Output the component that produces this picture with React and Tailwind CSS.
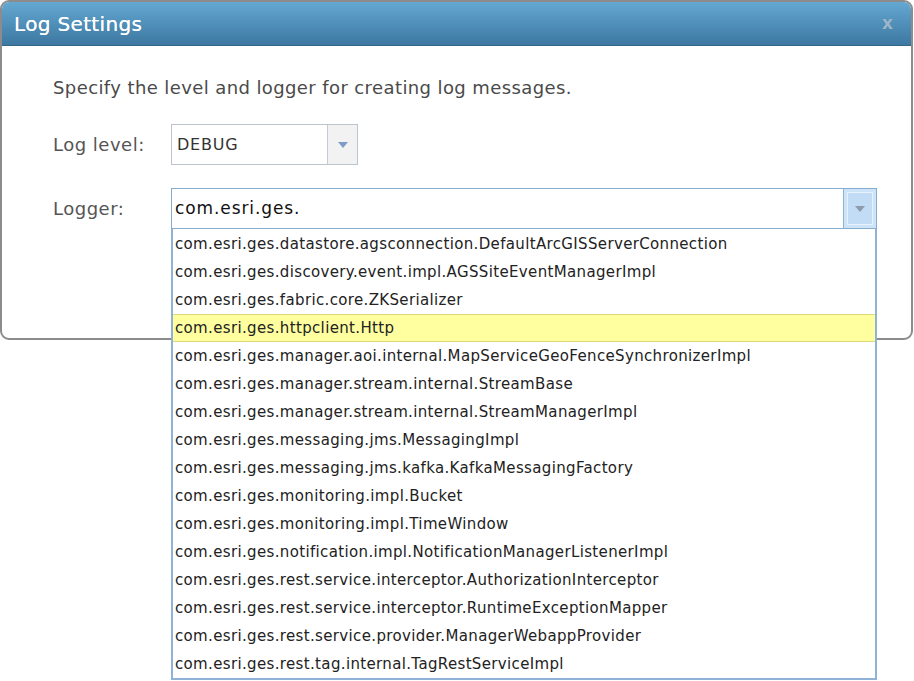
import React from 'react';

const loggers = [
  'com.esri.ges.datastore.agsconnection.DefaultArcGISServerConnection',
  'com.esri.ges.discovery.event.impl.AGSSiteEventManagerImpl',
  'com.esri.ges.fabric.core.ZKSerializer',
  'com.esri.ges.httpclient.Http',
  'com.esri.ges.manager.aoi.internal.MapServiceGeoFenceSynchronizerImpl',
  'com.esri.ges.manager.stream.internal.StreamBase',
  'com.esri.ges.manager.stream.internal.StreamManagerImpl',
  'com.esri.ges.messaging.jms.MessagingImpl',
  'com.esri.ges.messaging.jms.kafka.KafkaMessagingFactory',
  'com.esri.ges.monitoring.impl.Bucket',
  'com.esri.ges.monitoring.impl.TimeWindow',
  'com.esri.ges.notification.impl.NotificationManagerListenerImpl',
  'com.esri.ges.rest.service.interceptor.AuthorizationInterceptor',
  'com.esri.ges.rest.service.interceptor.RuntimeExceptionMapper',
  'com.esri.ges.rest.service.provider.ManagerWebappProvider',
  'com.esri.ges.rest.tag.internal.TagRestServiceImpl',
];

const Caret = ({ color }) => (
  <svg width="10" height="6" viewBox="0 0 10 6">
    <path d="M0 0 L10 0 L5 6 Z" fill={color} />
  </svg>
);

export default function App() {
  return (
    <div className="relative w-[914px] h-[681px] bg-white overflow-hidden font-['DejaVu_Sans',sans-serif]">
      {/* Dialog */}
      <div className="w-[913px] h-[340px] border-2 border-[#8c8c8c] rounded-[9px] overflow-hidden bg-white">
        <div className="h-[44px] flex items-center justify-between pl-3 pr-[18px] bg-gradient-to-b from-[#64a8d2] to-[#3d78a1] border-b border-[#33678c]">
          <span className="text-white text-[20px] tracking-[0.35px] [text-shadow:0_0_0.6px_#fff]">Log Settings</span>
          <span className="text-[#9bb6cb] text-[17px] font-bold leading-none [text-shadow:0_0_1px_#52809f]">x</span>
        </div>

        <div className="pl-[51px] pt-[31px]">
          <p className="text-[#4a4a4a] text-[18px] tracking-[0.4px] leading-[22px]">
            Specify the level and logger for creating log messages.
          </p>

          <div className="flex items-center mt-[25px]">
            <span className="w-[118px] text-[#555] text-[18px] tracking-[0.5px]">Log level:</span>
            <div className="flex w-[187px] h-[41px] border border-[#bcc5ce] bg-white">
              <span className="flex-1 flex items-center pl-[5px] text-[16px] tracking-[0.8px] text-[#333]">DEBUG</span>
              <div className="w-[30px] flex items-center justify-center bg-[#f2f2f2] border-l border-[#c4ccd4]">
                <Caret color="#7d9cc6" />
              </div>
            </div>
          </div>

          <div className="flex items-center mt-[23px]">
            <span className="w-[118px] text-[#555] text-[18px] tracking-[0.5px]">Logger:</span>
            <div className="flex w-[706px] h-[41px] border border-[#86acd0] bg-white">
              <span className="flex-1 flex items-center pl-[3px] text-[17px] tracking-[0.9px] text-[#111]">com.esri.ges.</span>
              <div className="w-[33px] p-[3px] bg-[#cde3f7] border-l border-[#8cb2d6]">
                <div className="w-full h-full flex items-center justify-center bg-[#c2dcf6] border border-[#e8f2fc]">
                  <Caret color="#8f9aaa" />
                </div>
              </div>
            </div>
          </div>
        </div>
      </div>

      {/* Dropdown list */}
      <ul className="absolute left-[171px] top-[229px] w-[706px] h-[451px] bg-white border-x-2 border-b-2 border-[#8fb3d8] pt-[1px]">
        {loggers.map((name, i) => (
          <li
            key={name}
            className={
              i === 3
                ? 'h-[28px] flex items-center pl-[2px] text-[15px] tracking-[0.35px] text-[#222] bg-[#ffffa0] border-y border-[#dcd67c]'
                : 'h-[28px] flex items-center pl-[2px] text-[15px] tracking-[0.35px] text-[#222] border-y border-transparent'
            }
          >
            {name}
          </li>
        ))}
      </ul>
    </div>
  );
}
